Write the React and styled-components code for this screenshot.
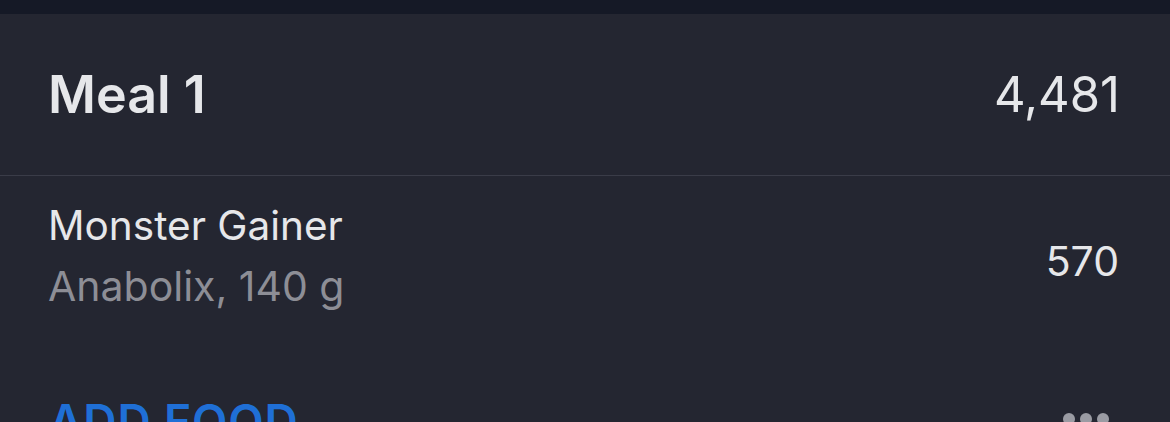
import React from 'react';
import styled, { createGlobalStyle } from 'styled-components';

const GlobalStyle = createGlobalStyle`
  html, body {
    margin: 0;
    padding: 0;
    background: #242631;
    overflow: hidden;
  }
  body {
    font-family: Inter, "Noto Sans", sans-serif;
    -webkit-font-smoothing: antialiased;
  }
`;

const Screen = styled.div`
  width: 1170px;
  height: 422px;
  display: flex;
  flex-direction: column;
  background: #242631;
  overflow: hidden;
`;

const TopStrip = styled.div`
  height: 14px;
  flex-shrink: 0;
  background: #151926;
`;

const MealHeader = styled.div`
  height: 161px;
  flex-shrink: 0;
  display: flex;
  align-items: center;
  justify-content: space-between;
  padding: 0 50px 0 48px;
  border-bottom: 1px solid #3a3c48;
`;

const MealTitle = styled.div`
  font-size: 52px;
  font-weight: 600;
  color: #e6e7ea;
`;

const MealTotal = styled.div`
  font-size: 49px;
  font-weight: 400;
  color: #e6e7ea;
`;

const FoodRow = styled.div`
  display: flex;
  align-items: center;
  justify-content: space-between;
  padding: 20px 51px 36px 48px;
  flex-shrink: 0;
`;

const FoodInfo = styled.div`
  display: flex;
  flex-direction: column;
`;

const FoodLine = styled.div`
  font-size: ${p => (p.$sub ? '41px' : '40.5px')};
  line-height: 60px;
  color: ${p => (p.$sub ? '#8d8e96' : '#e6e7ea')};
  font-weight: 400;
`;

const FoodCalories = styled.div`
  font-size: 41px;
  color: #e6e7ea;
  font-weight: 400;
  padding-top: 10px;
`;

const Footer = styled.div`
  display: flex;
  justify-content: space-between;
  align-items: flex-start;
  padding: 39px 61px 0 49px;
`;

const AddFood = styled.div`
  font-size: 46px;
  line-height: 60px;
  font-weight: 600;
  color: #1f6fd6;
  letter-spacing: 0.9px;
`;

const Dots = styled.div`
  display: flex;
  gap: 5px;
  margin-top: 22px;
`;

const Dot = styled.span`
  width: 12px;
  height: 12px;
  border-radius: 50%;
  background: #9a9ba3;
`;

export default function App() {
  return (
    <>
      <GlobalStyle />
      <Screen>
        <TopStrip />
        <MealHeader>
          <MealTitle>Meal 1</MealTitle>
          <MealTotal>4,481</MealTotal>
        </MealHeader>
        <FoodRow>
          <FoodInfo>
            <FoodLine>Monster Gainer</FoodLine>
            <FoodLine $sub>Anabolix, 140 g</FoodLine>
          </FoodInfo>
          <FoodCalories>570</FoodCalories>
        </FoodRow>
        <Footer>
          <AddFood>ADD FOOD</AddFood>
          <Dots>
            <Dot />
            <Dot />
            <Dot />
          </Dots>
        </Footer>
      </Screen>
    </>
  );
}
